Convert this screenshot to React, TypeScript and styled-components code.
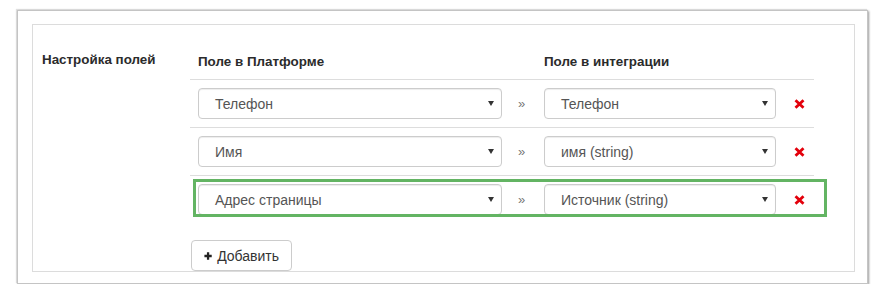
import React from "react";
import styled, { createGlobalStyle } from "styled-components";

const GlobalStyle = createGlobalStyle`
  html, body { margin: 0; padding: 0; background: #ffffff; }
  body { font-family: "Liberation Sans", Arial, sans-serif; color: #333; }
  * { box-sizing: border-box; }
`;

const Frame = styled.div`
  margin: 10px 0 0 17px;
  width: 851px;
  height: 274px;
  border: 1px solid #c4c4c4;
  box-shadow: 1px 1px 2px rgba(0, 0, 0, 0.4), -1px -1px 1px rgba(0, 0, 0, 0.12);
  background: #fff;
  padding: 13px 0 0 14px;
`;

const Panel = styled.div`
  width: 823px;
  border: 1px solid #dcdcdc;
  padding: 27px 0 0 9px;
  display: grid;
  grid-template-columns: 148px 624px;
  align-items: start;
`;

const SectionLabel = styled.div`
  font-size: 13.4px;
  font-weight: bold;
  line-height: 20px;
  margin-top: -2px;
  color: #2b2b2b;
`;

const Body = styled.div`
  display: flex;
  flex-direction: column;
  align-items: flex-start;
`;

const Table = styled.div`
  width: 624px;
  display: flex;
  flex-direction: column;
`;

const Grid = styled.div`
  display: grid;
  grid-template-columns: 320px 26px 248px 30px;
  align-items: center;
`;

const HeadRow = styled(Grid)`
  padding-bottom: 7px;
  border-bottom: 1px solid #dddddd;
`;

const HeadCell = styled.div`
  padding: 0 8px;
  font-size: 13.4px;
  font-weight: bold;
  line-height: 20px;
  color: #2b2b2b;
`;

const Row = styled(Grid)<{ $first?: boolean }>`
  position: relative;
  padding: 8px 0;
  border-top: ${(p) => (p.$first ? "0" : "1px solid #dddddd")};
`;

const Cell = styled.div`
  padding: 0 8px;
  display: flex;
  align-items: center;
`;

const Highlight = styled.div`
  position: absolute;
  top: 3px;
  left: 3px;
  width: 634px;
  height: 38px;
  border: 3px solid #63b463;
  pointer-events: none;
`;

const Select = styled.div`
  width: 100%;
  height: 31px;
  border: 1px solid #cccccc;
  border-radius: 4px;
  box-shadow: inset 0 1px 1px rgba(0, 0, 0, 0.075);
  background: #fff;
  display: flex;
  align-items: center;
  justify-content: space-between;
  padding: 0 7px 0 16px;
  font-size: 14px;
  color: #555;
`;

const Caret = styled.span`
  width: 0;
  height: 0;
  border-left: 3px solid transparent;
  border-right: 3px solid transparent;
  border-top: 5px solid #333;
`;

const Arrow = styled.span`
  font-size: 13px;
  color: #777;
  line-height: 1;
`;

const RemoveCell = styled.div`
  display: flex;
  justify-content: center;
  align-items: center;
`;

const AddButton = styled.button`
  margin: 17px 0 0 1px;
  width: 101px;
  height: 31px;
  border: 1px solid #cccccc;
  border-radius: 4px;
  background: #fff;
  display: flex;
  align-items: center;
  gap: 5px;
  padding: 0 12px;
  font-family: "Liberation Sans", Arial, sans-serif;
  font-size: 14px;
  color: #333;
`;

const RemoveIcon = () => (
  <svg width="11" height="10" viewBox="0 0 11 10">
    <path d="M1.5 1.2 L9.5 8.8 M9.5 1.2 L1.5 8.8" stroke="#e3000b" strokeWidth="2.8" fill="none" />
  </svg>
);

const PlusIcon = () => (
  <svg width="10" height="10" viewBox="0 0 10 10">
    <path d="M5 0.5 V9.5 M0.5 5 H9.5" stroke="#222" strokeWidth="2.8" fill="none" />
  </svg>
);

const rows = [
  { left: "Телефон", right: "Телефон" },
  { left: "Имя", right: "имя (string)" },
  { left: "Адрес страницы", right: "Источник (string)", highlight: true },
];

export default function App() {
  return (
    <>
      <GlobalStyle />
      <Frame>
        <Panel>
          <SectionLabel>Настройка полей</SectionLabel>
          <Body>
            <Table>
              <HeadRow>
                <HeadCell>Поле в Платформе</HeadCell>
                <HeadCell />
                <HeadCell>Поле в интеграции</HeadCell>
                <HeadCell />
              </HeadRow>
              {rows.map((r, i) => (
                <Row key={i} $first={i === 0}>
                  <Cell>
                    <Select>
                      <span>{r.left}</span>
                      <Caret />
                    </Select>
                  </Cell>
                  <Cell>
                    <Arrow>»</Arrow>
                  </Cell>
                  <Cell>
                    <Select>
                      <span>{r.right}</span>
                      <Caret />
                    </Select>
                  </Cell>
                  <RemoveCell>
                    <RemoveIcon />
                  </RemoveCell>
                  {r.highlight && <Highlight />}
                </Row>
              ))}
            </Table>
            <AddButton>
              <PlusIcon />
              <span>Добавить</span>
            </AddButton>
          </Body>
        </Panel>
      </Frame>
    </>
  );
}
